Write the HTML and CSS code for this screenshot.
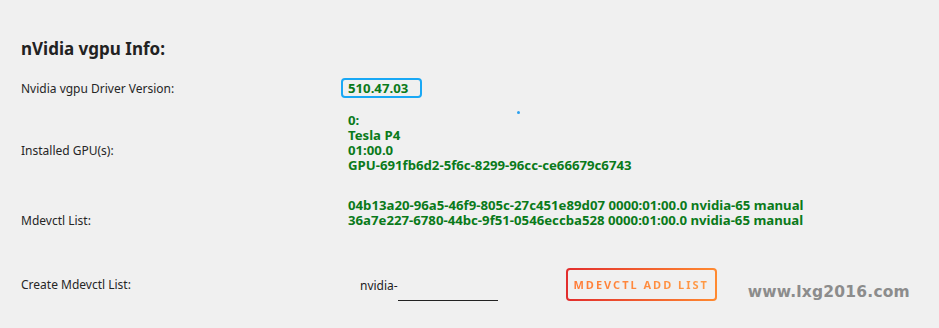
FILE: index.html
```html
<!DOCTYPE html>
<html>
<head>
<meta charset="utf-8">
<link rel="stylesheet" href="styles.css">
</head>
<body>
<div class="page">
  <h2 class="title">nVidia vgpu Info:</h2>
  <div class="info">
    <div class="row row-version">
      <div class="label">Nvidia vgpu Driver Version:</div>
      <div class="value"><span class="version">510.47.03</span></div>
    </div>
    <div class="row row-gpu">
      <div class="label">Installed GPU(s):</div>
      <div class="value">0:<br>Tesla P4<br>01:00.0<br>GPU-691fb6d2-5f6c-8299-96cc-ce66679c6743<br>&nbsp;</div>
    </div>
    <div class="row row-mdev">
      <div class="label">Mdevctl List:</div>
      <div class="value">04b13a20-96a5-46f9-805c-27c451e89d07 0000:01:00.0 nvidia-65 manual<br>36a7e227-6780-44bc-9f51-0546eccba528 0000:01:00.0 nvidia-65 manual<br>&nbsp;</div>
    </div>
  </div>
  <div class="create">
    <div class="label">Create Mdevctl List:</div>
    <div class="field"><span class="prefix">nvidia-</span><span class="input"></span></div>
    <button class="add"><span>MDEVCTL ADD LIST</span></button>
    <div class="mark">www.lxg2016.com</div>
  </div>
  <span class="dot"></span>
</div>
</body>
</html>
```
FILE: styles.css
```css
html, body {
  margin: 0;
  padding: 0;
  background: #f0f0f0;
}
body {
  font-family: "Noto Sans", "Open Sans", sans-serif;
  color: #222;
  width: 939px;
  height: 328px;
  overflow: hidden;
}
.page {
  position: relative;
  padding: 38px 0 0 21px;
}
.title {
  margin: 0;
  font-size: 17px;
  font-weight: 700;
  line-height: 22px;
  color: #222;
}
.info {
  display: flex;
  flex-direction: column;
  margin-top: 18px;
}
.row {
  display: grid;
  grid-template-columns: 327px 1fr;
  align-items: center;
}
.row-gpu {
  margin-top: 15px;
}
.row-mdev {
  margin-top: 10px;
}
.label {
  font-size: 12px;
  line-height: 15px;
  color: #262626;
}
.value {
  font-size: 13.2px;
  line-height: 15px;
  font-weight: 700;
  color: #0a7a1a;
}
.version {
  display: inline-block;
  margin-left: -7px;
  padding: 1px 12px 1px 5px;
  border: 2px solid #19a8f5;
  border-radius: 4px;
  line-height: 14px;
}
.create {
  display: flex;
  align-items: center;
  margin-top: 25px;
  height: 33px;
}
.create .label {
  width: 339px;
}
.field {
  display: flex;
  align-items: flex-start;
  font-size: 12px;
  height: 33px;
  padding-top: 10px;
  box-sizing: border-box;
  color: #222;
}
.prefix {
  line-height: 15px;
}
.input {
  display: inline-block;
  width: 100px;
  height: 22px;
  border-bottom: 1px solid #222;
}
.add {
  margin-left: 68px;
  width: 151px;
  height: 33px;
  border: 2px solid transparent;
  border-radius: 4px;
  background: linear-gradient(#f0f0f0, #f0f0f0) padding-box, linear-gradient(90deg, #e22d2d, #ff8a30) border-box;
  font-family: "Noto Sans", sans-serif;
  font-size: 11px;
  font-weight: 700;
  letter-spacing: 2px;
  padding: 0;
}
.add span {
  background: linear-gradient(90deg, #ff7a35, #ff9a45);
  -webkit-background-clip: text;
  background-clip: text;
  color: transparent;
}
.mark {
  align-self: flex-end;
  margin-left: 31px;
  font-family: "DejaVu Sans", sans-serif;
  font-size: 15.5px;
  line-height: 18px;
  font-weight: 700;
  color: #8c8c8c;
  letter-spacing: 0.2px;
}
.dot {
  position: absolute;
  left: 517px;
  top: 111px;
  width: 3px;
  height: 3px;
  border-radius: 50%;
  background: #2aa0f0;
}
```
